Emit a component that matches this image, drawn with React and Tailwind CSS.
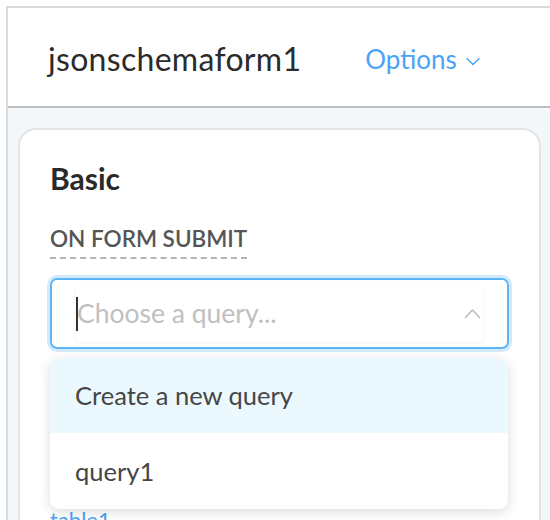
import React from 'react';

const font = { fontFamily: 'Lato, "Open Sans", sans-serif' };

function ChevronDown({ className }) {
  return (
    <svg className={className} width="14" height="9" viewBox="0 0 14 9" fill="none">
      <path d="M1 1.5L7 7.5L13 1.5" stroke="currentColor" strokeWidth="1.5" strokeLinecap="round" strokeLinejoin="round" />
    </svg>
  );
}

function ChevronUp({ className }) {
  return (
    <svg className={className} width="17" height="11" viewBox="0 0 17 11" fill="none">
      <path d="M1.5 9.5L8.5 2L15.5 9.5" stroke="currentColor" strokeWidth="1.6" strokeLinecap="round" strokeLinejoin="round" />
    </svg>
  );
}

export default function App() {
  return (
    <div className="w-[550px] h-[520px] overflow-hidden bg-white pt-[6px] pl-[6px]" style={font}>
      <div className="h-full border-t-2 border-l-2 border-[#dadada] flex flex-col">
        {/* Header */}
        <div className="h-[100px] shrink-0 border-b-2 border-[#bdbdbd] flex items-center pl-[40px] pt-[4px]">
          <span className="text-[32px] text-[#2b2b2b] tracking-[0.3px]">jsonschemaform1</span>
          <button className="ml-[64px] flex items-center gap-[9px] text-[#4ca3f4] text-[26px]">
            Options
            <ChevronDown className="mt-[4px]" />
          </button>
        </div>

        {/* Body */}
        <div className="flex-1 bg-[#f4f7fa] pl-[10px] pr-[9px] pt-[20px]">
          <div className="relative h-[420px] bg-white border-2 border-[#e4e4e4] rounded-[18px] px-[30px] pt-[28px]">
            <div className="text-[30px] font-bold text-[#2a2a2a] leading-[40px]">Basic</div>
            <div className="mt-[27px] inline-block text-[22.5px] font-semibold text-[#555] leading-[28px] border-b-2 border-dashed border-[#b4b4bc] pb-[4px]">
              ON FORM SUBMIT
            </div>

            {/* Select */}
            <div className="mt-[19px] h-[71px] rounded-[7px] border-2 border-[#5db5f6] ring-[3px] ring-[#d3eafc] flex items-center pl-[24px] pr-[24px]">
              <div className="flex-1 h-[56px] flex items-center bg-white shadow-[0_1px_4px_rgba(0,0,0,0.06)] rounded-[4px]">
                <span className="w-[2px] h-[34px] bg-[#333] mr-[-1px]" />
                <span className="text-[26.5px] text-[#c0c0c0]">Choose a query...</span>
                <ChevronUp className="ml-auto mr-[2px] text-[#bcbcbc]" />
              </div>
            </div>

            <div className="mt-[157px] text-[22px] text-[#4ca3f4] leading-[28px]">table1</div>

            {/* Dropdown menu */}
            <div className="absolute left-[30px] top-[228px] w-[458px] bg-white rounded-[9px] shadow-[0_3px_12px_rgba(0,0,0,0.14)] overflow-hidden">
              <div className="h-[75px] bg-[#ebf8fd] flex items-center pl-[25px] text-[25.5px] text-[#464646]">
                Create a new query
              </div>
              <div className="h-[76px] flex items-center pl-[25px] text-[25.5px] text-[#464646]">
                query1
              </div>
            </div>
          </div>
        </div>
      </div>
    </div>
  );
}
